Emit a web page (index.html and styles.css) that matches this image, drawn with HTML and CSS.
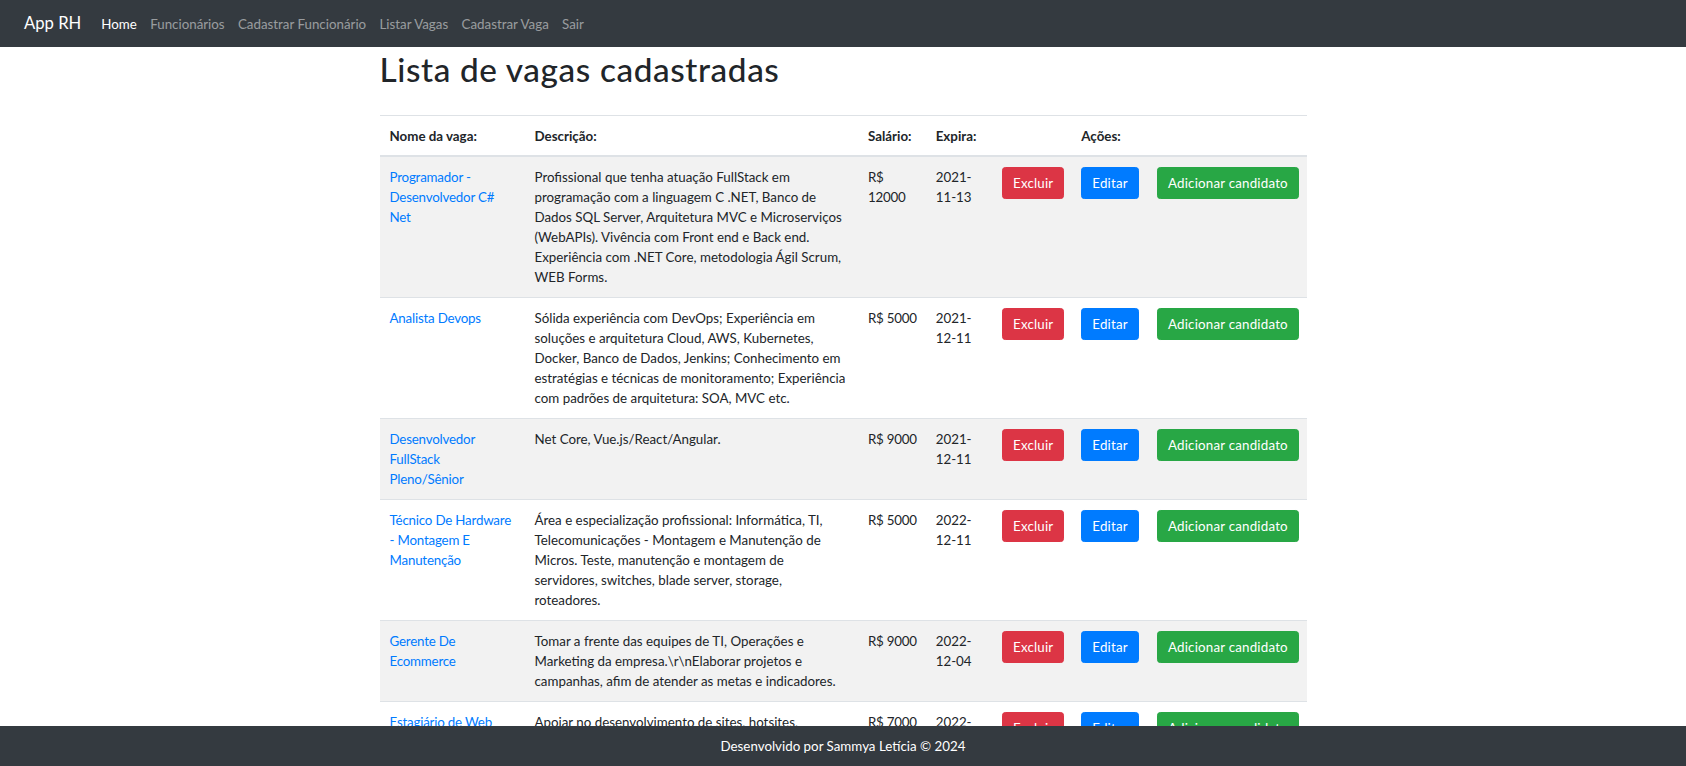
FILE: index.html
```html
<!DOCTYPE html>
<html lang="pt-BR">
<head>
<meta charset="utf-8">
<title>App RH</title>
<link rel="stylesheet" href="styles.css">
</head>
<body>
<nav class="navbar">
  <a class="brand" href="#">App RH</a>
  <ul class="nav">
    <li><a class="nav-link active" href="#">Home</a></li>
    <li><a class="nav-link" href="#">Funcionários</a></li>
    <li><a class="nav-link" href="#">Cadastrar Funcionário</a></li>
    <li><a class="nav-link" href="#">Listar Vagas</a></li>
    <li><a class="nav-link" href="#">Cadastrar Vaga</a></li>
    <li><a class="nav-link" href="#">Sair</a></li>
  </ul>
</nav>

<main class="container">
  <h1 class="title">Lista de vagas cadastradas</h1>
  <table class="table">
    <colgroup>
      <col class="c-name"><col class="c-desc"><col class="c-sal"><col class="c-exp"><col class="c-del"><col class="c-edit"><col class="c-add">
    </colgroup>
    <thead>
      <tr>
        <th>Nome da vaga:</th>
        <th>Descrição:</th>
        <th>Salário:</th>
        <th>Expira:</th>
        <th></th>
        <th>Ações:</th>
        <th></th>
      </tr>
    </thead>
    <tbody>
      <tr>
        <td class="name"><a href="#">Programador - Desenvolvedor C# Net</a></td>
        <td>Profissional que tenha atuação FullStack em programação com a linguagem C .NET, Banco de Dados SQL Server, Arquitetura MVC e Microserviços (WebAPIs). Vivência com Front end e Back end. Experiência com .NET Core, metodologia Ágil Scrum, WEB Forms.</td>
        <td class="salary">R$ 12000</td>
        <td>2021-11-13</td>
        <td><a class="btn btn-danger" href="#">Excluir</a></td>
        <td><a class="btn btn-primary" href="#">Editar</a></td>
        <td><a class="btn btn-success" href="#">Adicionar candidato</a></td>
      </tr>
      <tr>
        <td class="name"><a href="#">Analista Devops</a></td>
        <td>Sólida experiência com DevOps; Experiência em soluções e arquitetura Cloud, AWS, Kubernetes, Docker, Banco de Dados, Jenkins; Conhecimento em estratégias e técnicas de monitoramento; Experiência com padrões de arquitetura: SOA, MVC etc.</td>
        <td class="salary">R$ 5000</td>
        <td>2021-12-11</td>
        <td><a class="btn btn-danger" href="#">Excluir</a></td>
        <td><a class="btn btn-primary" href="#">Editar</a></td>
        <td><a class="btn btn-success" href="#">Adicionar candidato</a></td>
      </tr>
      <tr>
        <td class="name"><a href="#">Desenvolvedor FullStack Pleno/Sênior</a></td>
        <td>Net Core, Vue.js/React/Angular.</td>
        <td class="salary">R$ 9000</td>
        <td>2021-12-11</td>
        <td><a class="btn btn-danger" href="#">Excluir</a></td>
        <td><a class="btn btn-primary" href="#">Editar</a></td>
        <td><a class="btn btn-success" href="#">Adicionar candidato</a></td>
      </tr>
      <tr>
        <td class="name"><a href="#">Técnico De Hardware - Montagem E Manutenção</a></td>
        <td>Área e especialização profissional: Informática, TI, Telecomunicações - Montagem e Manutenção de Micros. Teste, manutenção e montagem de servidores, switches, blade server, storage, roteadores.</td>
        <td class="salary">R$ 5000</td>
        <td>2022-12-11</td>
        <td><a class="btn btn-danger" href="#">Excluir</a></td>
        <td><a class="btn btn-primary" href="#">Editar</a></td>
        <td><a class="btn btn-success" href="#">Adicionar candidato</a></td>
      </tr>
      <tr>
        <td class="name"><a href="#">Gerente De Ecommerce</a></td>
        <td>Tomar a frente das equipes de TI, Operações e Marketing da empresa.\r\nElaborar projetos e campanhas, afim de atender as metas e indicadores.</td>
        <td class="salary">R$ 9000</td>
        <td>2022-12-04</td>
        <td><a class="btn btn-danger" href="#">Excluir</a></td>
        <td><a class="btn btn-primary" href="#">Editar</a></td>
        <td><a class="btn btn-success" href="#">Adicionar candidato</a></td>
      </tr>
      <tr>
        <td class="name"><a href="#">Estagiário de Web Design</a></td>
        <td>Apoiar no desenvolvimento de sites, hotsites, aplicativos e landing pages.</td>
        <td class="salary">R$ 7000</td>
        <td>2022-12-15</td>
        <td><a class="btn btn-danger" href="#">Excluir</a></td>
        <td><a class="btn btn-primary" href="#">Editar</a></td>
        <td><a class="btn btn-success" href="#">Adicionar candidato</a></td>
      </tr>
    </tbody>
  </table>
</main>

<footer class="footer">Desenvolvido por Sammya Letícia © 2024</footer>
</body>
</html>
```

FILE: styles.css
```css
* { box-sizing: border-box; }

html, body {
  margin: 0;
  padding: 0;
}

body {
  font-family: "Lato", "Liberation Sans", sans-serif;
  font-size: 13.333px;
  line-height: 20px;
  color: #212529;
  background: #fff;
  padding-bottom: 60px;
}

a { text-decoration: none; }

.navbar {
  display: flex;
  align-items: center;
  height: 47px;
  padding: 0 13px 0 24px;
  background: #343a40;
}

.brand {
  color: #fff;
  font-size: 16.667px;
  line-height: 25px;
  margin-right: 13.333px;
}

.nav {
  display: flex;
  list-style: none;
  margin: 0;
  padding: 0;
}

.nav-link {
  display: block;
  padding: 6.667px;
  color: rgba(255, 255, 255, 0.5);
}

.nav-link.active { color: #fff; }

.container {
  width: 927px;
  margin: 0 auto;
}

.title {
  margin: 0 0 26px;
  padding-top: 2px;
  font-size: 33.333px;
  line-height: 40px;
  font-weight: 500;
  letter-spacing: 0.6px;
  color: #212529;
}

.table {
  width: 100%;
  border-collapse: collapse;
  table-layout: fixed;
}

.c-name { width: 145px; }
.c-desc { width: 333.5px; }
.c-sal { width: 67.7px; }
.c-exp { width: 66.3px; }
.c-del { width: 79.3px; }
.c-edit { width: 75.7px; }
.c-add { width: 159.5px; }

.table th,
.table td {
  padding: 10px;
  vertical-align: top;
  text-align: left;
  border-top: 1px solid #dee2e6;
}

.table th {
  font-weight: 700;
  vertical-align: bottom;
  padding-bottom: 9px;
  border-bottom: 2px solid #dee2e6;
}

.table td.name {
  letter-spacing: -0.2px;
}

.table td.salary {
  padding-right: 6px;
  letter-spacing: -0.25px;
}

.table tbody tr:nth-child(odd) { background: #f2f2f2; }

.table td a:not(.btn) { color: #007bff; }

.btn {
  display: inline-block;
  padding: 5px 10px;
  font-size: 13.333px;
  line-height: 20px;
  border: 1px solid transparent;
  border-radius: 3.333px;
  color: #fff;
  white-space: nowrap;
  letter-spacing: 0.2px;
}

.btn-danger { background: #dc3545; border-color: #dc3545; }
.btn-primary { background: #007bff; border-color: #007bff; }
.btn-success { background: #28a745; border-color: #28a745; }

.footer {
  position: fixed;
  left: 0;
  right: 0;
  bottom: 0;
  height: 40px;
  line-height: 40px;
  text-align: center;
  color: #fff;
  background: #343a40;
}
```
